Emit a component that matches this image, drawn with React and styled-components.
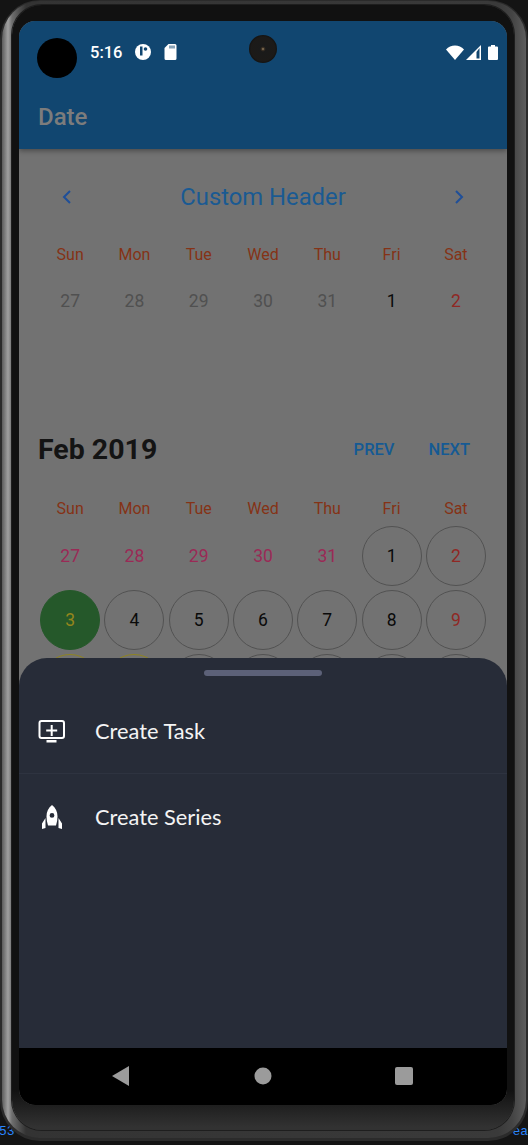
import React from 'react';
import styled, { createGlobalStyle } from 'styled-components';

const GlobalStyle = createGlobalStyle`
  html, body {
    margin: 0;
    padding: 0;
    width: 528px;
    height: 1145px;
    overflow: hidden;
    background: #141414;
    font-family: Roboto, "Liberation Sans", sans-serif;
  }
`;

const Page = styled.div`
  position: relative;
  width: 528px;
  height: 1145px;
  overflow: hidden;
`;

const BehindText = styled.span`
  position: absolute;
  bottom: 6px;
  ${(p) => (p.$right ? 'right: 0;' : 'left: -1px;')}
  font: 13px "Liberation Mono", monospace;
  color: #2a86ff;
`;

const DeviceShell = styled.div`
  position: relative;
  box-sizing: border-box;
  width: 528px;
  height: 1141px;
  padding: 1px 2px 3px;
  border-radius: 40px;
  background: #2b2b2b;
`;

const DeviceRim = styled.div`
  box-sizing: border-box;
  height: 100%;
  padding: 4px 12px 8px 10px;
  border-radius: 38px;
  background: linear-gradient(90deg, #5c5c5c 0, #a0a0a0 6px, #6e6e6e 10px, #333 24px, #3a3a3a 496px, #444 510px, #5c5c5c 524px);
`;

const DeviceBezel = styled.div`
  box-sizing: border-box;
  height: 100%;
  padding: 16px 7px 23px 7px;
  border-radius: 30px;
  background: linear-gradient(180deg, #111 0, #111 1085px, #323232 1122px);
  box-shadow: 0 0 0 1px #1e1e1e;
`;

const Screen = styled.div`
  position: relative;
  display: flex;
  flex-direction: column;
  width: 488px;
  height: 1084px;
  border-radius: 16px;
  overflow: hidden;
  background: #727272;
`;

const AppHeader = styled.header`
  flex: none;
  height: 128px;
  background: #114670;
  box-shadow: 0 2px 5px rgba(0, 0, 0, 0.35);
  z-index: 1;
`;

const StatusBar = styled.div`
  display: flex;
  align-items: center;
  height: 62px;
  padding: 0 9px 0 71px;
  color: #fff;
`;

const Clock = styled.span`
  font-size: 16.5px;
  font-weight: 500;
  margin-right: 13px;
`;

const StatusIcon = styled.svg`
  display: block;
  flex: none;
  margin-right: ${(p) => p.$gap || 0}px;
`;

const Spacer = styled.div`
  flex: 1;
`;

const PunchHole = styled.div`
  position: absolute;
  left: 18px;
  top: 17px;
  width: 40px;
  height: 40px;
  border-radius: 50%;
  background: #000;
  z-index: 2;
`;

const Camera = styled.div`
  position: absolute;
  left: 230px;
  top: 14px;
  width: 28px;
  height: 28px;
  border-radius: 50%;
  background: radial-gradient(circle at 50% 50%, #d8c4a0 0, #4a3a28 5%, #1a1a1a 14%, #1c1a18 60%, #060606 88%);
  z-index: 2;
`;

const HeaderTitle = styled.h1`
  margin: 0;
  padding-left: 19px;
  font-size: 24px;
  line-height: 68px;
  font-weight: 500;
  color: #7c7c7c;
`;

const Content = styled.main`
  flex: 1;
  min-height: 0;
  overflow: hidden;
  padding: 24px 19px 0;
`;

const CustomHeader = styled.div`
  display: flex;
  align-items: center;
  justify-content: space-between;
  height: 48px;
  padding: 0 24px;
`;

const CustomTitle = styled.div`
  font-size: 23.8px;
  color: #1a5a92;
`;

const Chevron = styled.svg`
  display: block;
  width: 9px;
  height: 14px;
  fill: none;
  stroke: #1f4f99;
  stroke-width: 2;
`;

const MonthHeader = styled.div`
  display: flex;
  align-items: center;
  height: 40px;
  margin-top: 96px;
`;

const MonthTitle = styled.div`
  flex: 1;
  font-size: 28.5px;
  font-weight: 700;
  color: #141414;
`;

const MonthButton = styled.div`
  margin-left: 34px;
  margin-right: ${(p) => (p.$last ? 18 : 0)}px;
  font-size: 16.5px;
  font-weight: 500;
  color: #155a94;
`;

const WeekRow = styled.div`
  display: grid;
  grid-template-columns: repeat(7, 1fr);
  margin-top: ${(p) => p.$top}px;
`;

const WeekDay = styled.div`
  height: 24px;
  line-height: 24px;
  text-align: center;
  font-size: 16px;
  color: #853216;
`;

const DayGrid = styled.div`
  display: grid;
  grid-template-columns: repeat(7, 1fr);
  grid-auto-rows: 64px;
  margin-top: ${(p) => p.$top}px;
`;

const Day = styled.div`
  box-sizing: border-box;
  display: flex;
  align-items: center;
  justify-content: center;
  justify-self: center;
  align-self: center;
  width: 60px;
  height: 60px;
  border-radius: 50%;
  border: 1px solid ${(p) => p.$ring || 'transparent'};
  background: ${(p) => p.$fill || 'transparent'};
  font-size: 17.5px;
  color: ${(p) => p.$color};
`;

const Sheet = styled.section`
  position: absolute;
  left: 0;
  right: 0;
  bottom: 57px;
  height: 390px;
  border-radius: 28px 28px 0 0;
  background: #272c38;
  z-index: 3;
`;

const Handle = styled.div`
  width: 118px;
  height: 6px;
  margin: 12px auto 0;
  border-radius: 3px;
  background: #5c6178;
`;

const SheetList = styled.div`
  margin-top: 12px;
`;

const SheetRow = styled.div`
  display: flex;
  align-items: center;
  height: 86px;
  padding-left: 19px;
  border-bottom: 1px solid ${(p) => (p.$divider ? '#2e3340' : 'transparent')};
  box-sizing: border-box;
`;

const SheetIcon = styled.svg`
  display: block;
  flex: none;
  width: 28px;
  height: 28px;
  margin-right: 29px;
`;

const SheetLabel = styled.span`
  font-family: Lato, "Liberation Sans", sans-serif;
  font-size: 21.8px;
  color: #f4f4f4;
`;

const NavBar = styled.nav`
  flex: none;
  display: flex;
  align-items: center;
  justify-content: center;
  gap: 124px;
  height: 57px;
  padding-bottom: 2px;
  box-sizing: border-box;
  background: #000;
  z-index: 4;
`;

const NavIcon = styled.svg`
  display: block;
  width: 18px;
  height: 20px;
  overflow: visible;
  fill: #9b9b9b;
`;

const weekDays = ['Sun', 'Mon', 'Tue', 'Wed', 'Thu', 'Fri', 'Sat'];

const BLACK = '#0a0a0a';
const RED = '#902824';
const PINK = '#9a2a56';
const GREY = '#505050';
const RING = '#525252';
const OLIVE = '#8f8420';

const customDays = [
  { n: 27, color: GREY }, { n: 28, color: GREY }, { n: 29, color: GREY }, { n: 30, color: GREY },
  { n: 31, color: GREY }, { n: 1, color: BLACK }, { n: 2, color: RED },
];

const febDays = [
  { n: 27, color: PINK }, { n: 28, color: PINK }, { n: 29, color: PINK }, { n: 30, color: PINK }, { n: 31, color: PINK },
  { n: 1, color: BLACK, ring: RING }, { n: 2, color: RED, ring: RING },
  { n: 3, color: '#94861c', fill: '#25582a', ring: '#25582a' }, { n: 4, color: BLACK, ring: RING }, { n: 5, color: BLACK, ring: RING },
  { n: 6, color: BLACK, ring: RING }, { n: 7, color: BLACK, ring: RING }, { n: 8, color: BLACK, ring: RING }, { n: 9, color: RED, ring: RING },
  { n: 10, color: BLACK, ring: OLIVE }, { n: 11, color: BLACK, ring: OLIVE }, { n: 12, color: BLACK, ring: RING }, { n: 13, color: BLACK, ring: RING },
  { n: 14, color: BLACK, ring: RING }, { n: 15, color: BLACK, ring: RING }, { n: 16, color: RED, ring: RING },
];

function Week({ top }) {
  return (
    <WeekRow $top={top}>
      {weekDays.map((d) => <WeekDay key={d}>{d}</WeekDay>)}
    </WeekRow>
  );
}

function Days({ days, top }) {
  return (
    <DayGrid $top={top}>
      {days.map((d, i) => <Day key={i} $color={d.color} $ring={d.ring} $fill={d.fill}>{d.n}</Day>)}
    </DayGrid>
  );
}

export default function App() {
  return (
    <Page>
      <GlobalStyle />
      <BehindText>53</BehindText>
      <BehindText $right>ea</BehindText>
      <DeviceShell>
        <DeviceRim>
          <DeviceBezel>
            <Screen>
              <PunchHole />
              <Camera />
              <AppHeader>
                <StatusBar>
                  <Clock>5:16</Clock>
                  <StatusIcon width="16" height="16" viewBox="0 0 16 16" $gap={13}>
                    <circle cx="8" cy="8" r="8" fill="#fff" />
                    <path d="M5 2.500h2.500v9H5z" fill="#114670" />
                    <circle cx="10.500" cy="5" r="1.800" fill="#114670" />
                  </StatusIcon>
                  <StatusIcon width="13" height="16" viewBox="0 0 13 16">
                    <path d="M4.500 0H11a1.500 1.500 0 0 1 1.500 1.500v13A1.500 1.500 0 0 1 11 16H2a1.500 1.500 0 0 1-1.500-1.500V4z" fill="#fff" />
                    <path d="M5.500 1.500h1v3h-1zM7.500 1.500h1v3h-1zM9.500 1.500h1v3h-1z" fill="#114670" />
                  </StatusIcon>
                  <Spacer />
                  <StatusIcon width="18" height="15" viewBox="0 0 18 15" $gap={2}>
                    <path d="M0 4.500C2.400 1.800 5.500.5 9 .5s6.600 1.300 9 4L9 15z" fill="#fff" />
                  </StatusIcon>
                  <StatusIcon width="15" height="15" viewBox="0 0 15 15" $gap={7}>
                    <path d="M15 0v15H0z" fill="#fff" />
                    <path d="M10.500 7v6.500H13.500V3z" fill="#114670" />
                  </StatusIcon>
                  <StatusIcon width="10" height="15" viewBox="0 0 10 15">
                    <path d="M3 0h4v1.500h2a1 1 0 0 1 1 1V14a1 1 0 0 1-1 1H1a1 1 0 0 1-1-1V2.500a1 1 0 0 1 1-1h2z" fill="#fff" />
                  </StatusIcon>
                </StatusBar>
                <HeaderTitle>Date</HeaderTitle>
              </AppHeader>

              <Content>
                <CustomHeader>
                  <Chevron viewBox="0 0 9 14"><path d="M8 1L2 7l6 6" /></Chevron>
                  <CustomTitle>Custom Header</CustomTitle>
                  <Chevron viewBox="0 0 9 14"><path d="M1 1l6 6-6 6" /></Chevron>
                </CustomHeader>
                <Week top={22} />
                <Days days={customDays} top={2} />

                <MonthHeader>
                  <MonthTitle>Feb 2019</MonthTitle>
                  <MonthButton>PREV</MonthButton>
                  <MonthButton $last>NEXT</MonthButton>
                </MonthHeader>
                <Week top={28} />
                <Days days={febDays} top={3} />
              </Content>

              <Sheet>
                <Handle />
                <SheetList>
                  <SheetRow $divider>
                    <SheetIcon viewBox="0 0 28 28">
                      <rect x="1.500" y="4" width="24.500" height="17" rx="2" fill="none" stroke="#fff" strokeWidth="2" />
                      <path d="M8.500 23h10v2.500h-10zM12.700 8h2v4.500h4.500v2h-4.500v4.500h-2v-4.500h-4.500v-2h4.500z" fill="#fff" />
                    </SheetIcon>
                    <SheetLabel>Create Task</SheetLabel>
                  </SheetRow>
                  <SheetRow>
                    <SheetIcon viewBox="0 0 28 28">
                      <path fillRule="evenodd" d="M14 2c3.600 2.800 5.500 6.800 5.500 11.500 0 3-.5 6-1.500 9h-8c-1-3-1.500-6-1.500-9C8.500 8.800 10.400 4.800 14 2zm0 8a2.400 2.400 0 1 0 0 4.800 2.400 2.400 0 0 0 0-4.800z" fill="#fff" />
                      <path d="M7.500 15v10l-3.500 1v-5.500zM20.500 15v10l3.500 1v-5.500z" fill="#fff" />
                    </SheetIcon>
                    <SheetLabel>Create Series</SheetLabel>
                  </SheetRow>
                </SheetList>
              </Sheet>

              <NavBar>
                <NavIcon viewBox="0 0 18 20"><path d="M17 0v20L0 10z" /></NavIcon>
                <NavIcon viewBox="0 0 18 20"><circle cx="9" cy="10" r="8.500" /></NavIcon>
                <NavIcon viewBox="0 0 18 20"><rect x="-1" y="1" width="18" height="18" rx="2" /></NavIcon>
              </NavBar>
            </Screen>
          </DeviceBezel>
        </DeviceRim>
      </DeviceShell>
    </Page>
  );
}
